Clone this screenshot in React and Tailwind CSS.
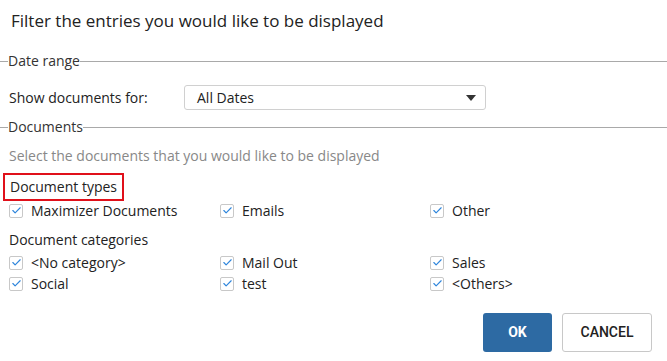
import { Check } from "lucide-react";

function Legend({ label }) {
  return (
    <div className="flex items-center h-[18px]">
      <div className="w-[8px] h-px bg-[#a9a9a9]" />
      <span className="text-[14px] leading-[18px] text-[#333]">{label}</span>
      <div className="flex-1 h-px bg-[#a9a9a9]" />
    </div>
  );
}

function Box({ label }) {
  return (
    <label className="flex items-center gap-[8px] h-[21px]">
      <span className="w-[14px] h-[14px] rounded-[2px] border border-[#c8c8c8] bg-white flex items-center justify-center">
        <Check size={11} strokeWidth={2.5} className="text-[#2f86dc]" />
      </span>
      <span className="text-[14px] text-[#222]">{label}</span>
    </label>
  );
}

export default function App() {
  const types = ["Maximizer Documents", "Emails", "Other"];
  const cats = ["<No category>", "Mail Out", "Sales", "Social", "test", "<Others>"];

  return (
    <div
      className="w-[667px] h-[361px] bg-white overflow-hidden"
      style={{ fontFamily: '"Open Sans", "Noto Sans", sans-serif' }}
    >
      <div className="px-[11px] pt-[8px] h-[52px] text-[17px] text-[#222]">
        Filter the entries you would like to be displayed
      </div>

      <Legend label="Date range" />
      <div className="flex items-center pl-[9px] mt-[15px] h-[25px]">
        <span className="w-[175px] text-[14px] text-[#222]">Show documents for:</span>
        <div className="w-[302px] h-[25px] border border-[#d0d0d0] rounded-[3px] flex items-center justify-between pl-[12px] pr-[9px]">
          <span className="text-[14px] text-[#222]">All Dates</span>
          <span className="w-0 h-0 border-l-[5px] border-r-[5px] border-t-[6px] border-l-transparent border-r-transparent border-t-[#333]" />
        </div>
      </div>

      <div className="mt-[8px]">
        <Legend label="Documents" />
      </div>
      <div className="pl-[9px] mt-[9px] text-[14px] text-[#888]">
        Select the documents that you would like to be displayed
      </div>

      <div className="pl-[3px] mt-[7px]">
        <div className="inline-block border-2 border-[#e0101a] px-[5px] h-[28px] leading-[24px] text-[14px] text-[#222]">
          Document types
        </div>
      </div>
      <div className="grid grid-cols-[211px_210px_1fr] pl-[9px] mt-[-1px]">
        {types.map((t) => (
          <Box key={t} label={t} />
        ))}
      </div>

      <div className="pl-[9px] mt-[8px] text-[14px] text-[#222] h-[21px]">Document categories</div>
      <div className="grid grid-cols-[211px_210px_1fr] pl-[9px] mt-[2px]">
        {cats.map((t) => (
          <Box key={t} label={t} />
        ))}
      </div>

      <div className="flex justify-end gap-[10px] pr-[15px] mt-[19px]" style={{ fontFamily: "Roboto, sans-serif" }}>
        <button className="w-[69px] h-[39px] rounded-[3px] bg-[#2d6aa3] text-white text-[14px] font-bold">
          OK
        </button>
        <button className="w-[90px] h-[39px] rounded-[3px] border border-[#c8c8c8] bg-white text-[#222] text-[14px] font-medium">
          CANCEL
        </button>
      </div>
    </div>
  );
}
